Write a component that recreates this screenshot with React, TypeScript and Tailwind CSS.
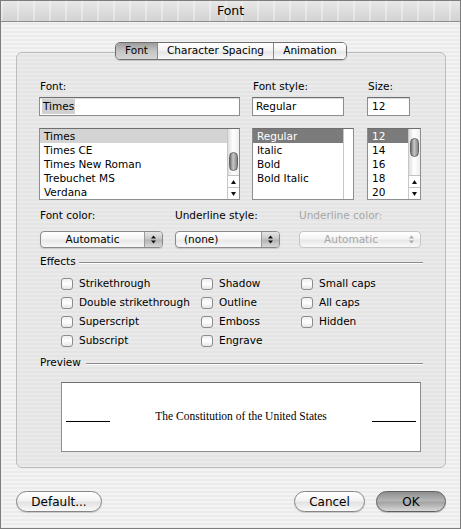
import React from "react";

const FONTS = ["Times", "Times CE", "Times New Roman", "Trebuchet MS", "Verdana"];
const STYLES = ["Regular", "Italic", "Bold", "Bold Italic"];
const SIZES = ["12", "14", "16", "18", "20"];

function Arrows({ disabled }: { disabled?: boolean }) {
  const c = disabled ? "#a9a9a9" : "#111111";
  return (
    <svg width="7" height="11" viewBox="0 0 7 11">
      <path d="M1 4.5 L3.5 1.5 L6 4.5 Z" fill={c} />
      <path d="M1 6.5 L3.5 9.5 L6 6.5 Z" fill={c} />
    </svg>
  );
}

function Popup({ text, width, center, disabled }: { text: string; width: string; center?: boolean; disabled?: boolean }) {
  return (
    <div
      className={`flex h-[17px] ${width} rounded-[4px] border overflow-hidden bg-[linear-gradient(#ffffff,#f4f4f4_45%,#e8e8e8_55%,#f9f9f9)] ${
        disabled ? "border-[#c6c6c6]" : "border-[#8a8a8a] shadow-[0_1px_1px_rgba(0,0,0,0.12)]"
      }`}
    >
      <div className={`flex-1 flex items-center ${center ? "justify-center" : "pl-[8px]"} ${disabled ? "text-[#a6a6a6]" : "text-black"}`}>
        {text}
      </div>
      <div
        className={`w-[18px] flex items-center justify-center ${
          disabled ? "" : "border-l border-[#9c9c9c] bg-[linear-gradient(#e6e6e6,#c6c6c6_48%,#b2b2b2_52%,#d8d8d8)]"
        }`}
      >
        <Arrows disabled={disabled} />
      </div>
    </div>
  );
}

function Scroller({ thumb }: { thumb: string }) {
  return (
    <div className="w-[12px] border-l border-[#c6c6c6] flex flex-col bg-[linear-gradient(90deg,#dedede,#ffffff_45%,#eeeeee)]">
      <div className="flex-1 flex flex-col items-center">
        <div className={`${thumb} w-[9px] h-[19px] rounded-full border border-[#666666] bg-[linear-gradient(90deg,#6f6f6f,#c9c9c9_45%,#858585)]`} />
      </div>
      <div className="h-[12px] border-t border-[#c2c2c2] flex items-center justify-center bg-white">
        <svg width="5" height="4" viewBox="0 0 5 4">
          <path d="M0 4 L2.5 0 L5 4 Z" fill="#111" />
        </svg>
      </div>
      <div className="h-[12px] border-t border-[#c2c2c2] flex items-center justify-center bg-white">
        <svg width="5" height="4" viewBox="0 0 5 4">
          <path d="M0 0 L2.5 4 L5 0 Z" fill="#111" />
        </svg>
      </div>
    </div>
  );
}

function Check({ label }: { label: string }) {
  return (
    <div className="flex items-center h-[19px]">
      <div className="w-[12px] h-[12px] rounded-[3px] border border-[#8c8c8c] bg-[linear-gradient(#eeeeee,#ffffff_50%,#e4e4e4)]" />
      <span className="ml-[6px]">{label}</span>
    </div>
  );
}

export default function App() {
  return (
    <div className="w-[461px] h-[529px] border border-[#7d7d7d] flex flex-col font-['DejaVu_Sans',sans-serif] text-[10.5px] text-black bg-[repeating-linear-gradient(180deg,#f3f3f3_0px,#f3f3f3_2px,#ebebeb_2px,#ebebeb_4px)]">
      {/* title bar */}
      <div className="h-[21px] border-b border-[#8c8c8c] flex items-center justify-center text-[12.5px] text-black bg-[repeating-linear-gradient(90deg,rgba(255,255,255,0.35)_0px,rgba(255,255,255,0.35)_2px,transparent_2px,transparent_16px),linear-gradient(#e8e8e8,#d2d2d2)]">
        Font
      </div>

      {/* group box */}
      <div className="relative mt-[30px] ml-[15px] w-[430px] h-[416px] rounded-[6px] border border-[#bcbcbc] bg-[repeating-linear-gradient(180deg,#eaeaea_0px,#eaeaea_2px,#e4e4e4_2px,#e4e4e4_4px)]">
        {/* tabs */}
        <div className="absolute top-[-11px] left-1/2 -translate-x-1/2 flex h-[18px] rounded-[5px] border border-[#6f6f6f] overflow-hidden shadow-[0_1px_1px_rgba(0,0,0,0.15)]">
          <div className="w-[41px] flex items-center justify-center bg-[linear-gradient(#9c9c9c,#c4c4c4_50%,#d6d6d6)]">Font</div>
          <div className="w-[116px] flex items-center justify-center border-l border-[#8a8a8a] bg-[linear-gradient(#ffffff,#f2f2f2_50%,#e6e6e6_55%,#fafafa)]">
            Character Spacing
          </div>
          <div className="w-[73px] flex items-center justify-center border-l border-[#8a8a8a] bg-[linear-gradient(#ffffff,#f2f2f2_50%,#e6e6e6_55%,#fafafa)]">
            Animation
          </div>
        </div>

        {/* font / style / size */}
        <div className="flex pl-[22px] pt-[27px] gap-[12px]">
          <div className="w-[201px] flex flex-col">
            <div className="h-[13px] pl-[1px] leading-[13px]">Font:</div>
            <div className="mt-[4px] h-[19px] border border-[#8e8e8e] border-t-[#6e6e6e] bg-white flex items-center pl-[2px] shadow-[inset_0_1px_1px_rgba(0,0,0,0.15)]">
              <span className="bg-[#d0d0d0] px-[1px]">Times</span>
            </div>
            <div className="mt-[12px] h-[72px] border border-[#8e8e8e] border-t-[#6e6e6e] bg-white flex">
              <div className="flex-1 flex flex-col">
                {FONTS.map((f, i) => (
                  <div key={f} className={`h-[14px] leading-[14px] pl-[4px] ${i === 0 ? "bg-[#d4d4d4]" : ""}`}>
                    {f}
                  </div>
                ))}
              </div>
              <Scroller thumb="mt-[23px]" />
            </div>
          </div>

          <div className="w-[102px] flex flex-col">
            <div className="h-[13px] pl-[1px] leading-[13px]">Font style:</div>
            <div className="mt-[4px] w-[92px] h-[19px] border border-[#8e8e8e] border-t-[#6e6e6e] bg-white flex items-center pl-[3px] shadow-[inset_0_1px_1px_rgba(0,0,0,0.15)]">
              Regular
            </div>
            <div className="mt-[12px] h-[72px] border border-[#8e8e8e] border-t-[#6e6e6e] bg-white flex">
              <div className="flex-1 flex flex-col">
                {STYLES.map((s, i) => (
                  <div key={s} className={`h-[14px] leading-[14px] pl-[4px] ${i === 0 ? "bg-[#7b7b7b] text-white" : ""}`}>
                    {s}
                  </div>
                ))}
              </div>
              <div className="w-[10px] border-l border-[#c6c6c6] bg-white" />
            </div>
          </div>

          <div className="w-[54px] flex flex-col ml-[1px]">
            <div className="h-[13px] pl-[1px] leading-[13px]">Size:</div>
            <div className="mt-[4px] w-[43px] h-[19px] border border-[#8e8e8e] border-t-[#6e6e6e] bg-white flex items-center pl-[4px] shadow-[inset_0_1px_1px_rgba(0,0,0,0.15)]">
              12
            </div>
            <div className="mt-[12px] h-[72px] border border-[#8e8e8e] border-t-[#6e6e6e] bg-white flex">
              <div className="flex-1 flex flex-col">
                {SIZES.map((s, i) => (
                  <div key={s} className={`h-[14px] leading-[14px] pl-[4px] ${i === 0 ? "bg-[#7b7b7b] text-white" : ""}`}>
                    {s}
                  </div>
                ))}
              </div>
              <Scroller thumb="mt-[9px]" />
            </div>
          </div>
        </div>

        {/* popups */}
        <div className="flex pl-[23px] mt-[9px]">
          <div className="w-[123px] flex flex-col">
            <div className="h-[13px] leading-[13px]">Font color:</div>
            <div className="mt-[9px]">
              <Popup text="Automatic" width="w-[123px]" center />
            </div>
          </div>
          <div className="w-[105px] ml-[12px] flex flex-col">
            <div className="h-[13px] leading-[13px]">Underline style:</div>
            <div className="mt-[9px]">
              <Popup text="(none)" width="w-[105px]" />
            </div>
          </div>
          <div className="w-[122px] ml-[19px] flex flex-col">
            <div className="h-[13px] leading-[13px] text-[#a6a6a6]">Underline color:</div>
            <div className="mt-[9px]">
              <Popup text="Automatic" width="w-[122px]" center disabled />
            </div>
          </div>
        </div>

        {/* effects */}
        <div className="flex items-center pl-[23px] pr-[22px] mt-[7px] h-[13px]">
          <span>Effects</span>
          <div className="flex-1 ml-[3px] mt-[2px] h-[2px] border-t border-[#8a8a8a] border-b border-b-white" />
        </div>
        <div className="flex pl-[44px] mt-[6px]">
          <div className="w-[140px] flex flex-col">
            <Check label="Strikethrough" />
            <Check label="Double strikethrough" />
            <Check label="Superscript" />
            <Check label="Subscript" />
          </div>
          <div className="w-[100px] flex flex-col">
            <Check label="Shadow" />
            <Check label="Outline" />
            <Check label="Emboss" />
            <Check label="Engrave" />
          </div>
          <div className="flex flex-col">
            <Check label="Small caps" />
            <Check label="All caps" />
            <Check label="Hidden" />
          </div>
        </div>

        {/* preview */}
        <div className="flex items-center pl-[23px] pr-[22px] mt-[6px] h-[13px]">
          <span>Preview</span>
          <div className="flex-1 ml-[5px] mt-[2px] h-[2px] border-t border-[#8a8a8a] border-b border-b-white" />
        </div>
        <div className="ml-[44px] mt-[13px] w-[360px] h-[70px] border border-[#8e8e8e] border-t-[#6e6e6e] bg-white flex items-center px-[4px]">
          <div className="w-[44px] h-[1px] bg-black mt-[8px]" />
          <div className="flex-1 text-center font-['Liberation_Serif',serif] text-[11.5px]">The Constitution of the United States</div>
          <div className="w-[44px] h-[1px] bg-black mt-[8px]" />
        </div>
      </div>

      {/* buttons */}
      <div className="flex justify-between mt-[23px] pl-[15px] pr-[14px] text-[12px]">
        <div className="w-[86px] h-[21px] rounded-full border border-[#858585] flex items-center justify-center bg-[linear-gradient(#ffffff,#f3f3f3_45%,#e2e2e2_55%,#f9f9f9)] shadow-[0_1px_1px_rgba(0,0,0,0.15)]">
          Default...
        </div>
        <div className="flex gap-[11px]">
          <div className="w-[71px] h-[21px] rounded-full border border-[#858585] flex items-center justify-center bg-[linear-gradient(#ffffff,#f3f3f3_45%,#e2e2e2_55%,#f9f9f9)] shadow-[0_1px_1px_rgba(0,0,0,0.15)]">
            Cancel
          </div>
          <div className="w-[70px] h-[21px] rounded-full border border-[#5f5f5f] flex items-center justify-center bg-[linear-gradient(#8e8e8e,#b5b5b5_45%,#a4a4a4_55%,#d8d8d8)] shadow-[0_1px_1px_rgba(0,0,0,0.2)]">
            OK
          </div>
        </div>
      </div>
    </div>
  );
}
